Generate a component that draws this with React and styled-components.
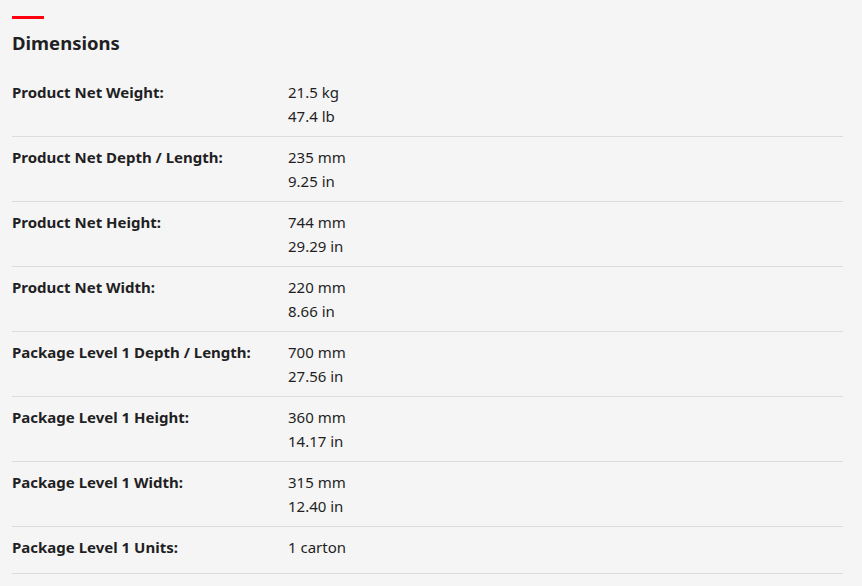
import React from 'react';
import styled, { createGlobalStyle } from 'styled-components';

const GlobalStyle = createGlobalStyle`
  html, body {
    margin: 0;
    padding: 0;
    background: #f5f5f5;
  }
  body {
    font-family: 'Noto Sans', 'Liberation Sans', sans-serif;
    color: #1f1f24;
  }
`;

const Section = styled.section`
  padding: 16px 19px 0 12px;
`;

const Accent = styled.div`
  width: 32px;
  height: 3px;
  background: #ff000f;
`;

const Title = styled.h2`
  margin: 12px 0 0;
  font-size: 18.5px;
  font-weight: 700;
  line-height: 24px;
`;

const Table = styled.div`
  margin-top: 17px;
`;

const Row = styled.div`
  display: grid;
  grid-template-columns: 276px 1fr;
  box-sizing: border-box;
  min-height: 47px;
  padding: 8px 0;
  border-bottom: 1px solid #dcdce0;
`;

const Label = styled.div`
  font-size: 15px;
  font-weight: 700;
  line-height: 24px;
`;

const Value = styled.div`
  font-size: 15px;
  line-height: 24px;
`;

const rows = [
  ['Product Net Weight:', ['21.5 kg', '47.4 lb']],
  ['Product Net Depth / Length:', ['235 mm', '9.25 in']],
  ['Product Net Height:', ['744 mm', '29.29 in']],
  ['Product Net Width:', ['220 mm', '8.66 in']],
  ['Package Level 1 Depth / Length:', ['700 mm', '27.56 in']],
  ['Package Level 1 Height:', ['360 mm', '14.17 in']],
  ['Package Level 1 Width:', ['315 mm', '12.40 in']],
  ['Package Level 1 Units:', ['1 carton']],
];

const App = () => (
  <>
    <GlobalStyle />
    <Section>
      <Accent />
      <Title>Dimensions</Title>
      <Table>
        {rows.map(([label, values]) => (
          <Row key={label}>
            <Label>{label}</Label>
            <div>
              {values.map(v => (
                <Value key={v}>{v}</Value>
              ))}
            </div>
          </Row>
        ))}
      </Table>
    </Section>
  </>
);

export default App;
